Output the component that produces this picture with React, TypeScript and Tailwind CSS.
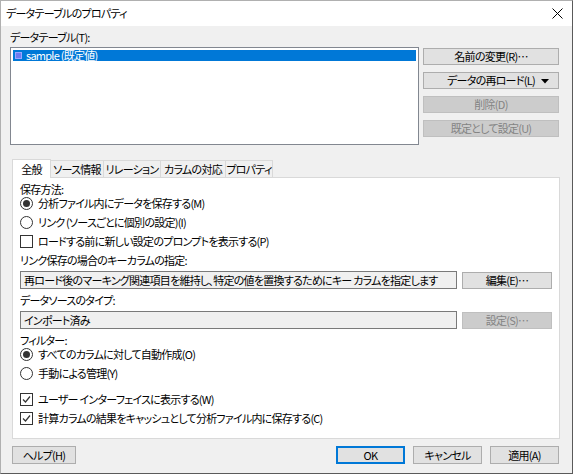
import React from 'react'

const font = { fontFamily: '"Noto Sans CJK JP", "Noto Sans", sans-serif' }

function Button({ label, disabled, primary, className = '', children }: { label: string; disabled?: boolean; primary?: boolean; className?: string; children?: React.ReactNode }) {
  const base = disabled
    ? 'bg-[#cccccc] border-[#bfbfbf] text-[#838383]'
    : primary
      ? 'bg-[#e1e1e1] border-[#0078d7] text-black outline outline-1 outline-[#0078d7] -outline-offset-2'
      : 'bg-[#e1e1e1] border-[#adadad] text-black'
  return (
    <div className={`h-[17px] border flex items-center justify-center leading-none ${base} ${className}`}>
      {label}
      {children}
    </div>
  )
}

function Radio({ checked, label }: { checked?: boolean; label: string }) {
  return (
    <div className="flex items-center gap-[5px] h-[19px]">
      <span className="w-[13px] h-[13px] rounded-full border border-[#333333] bg-white flex items-center justify-center">
        {checked && <span className="w-[7px] h-[7px] rounded-full bg-[#333333]" />}
      </span>
      <span>{label}</span>
    </div>
  )
}

function Check({ checked, label }: { checked?: boolean; label: string }) {
  return (
    <div className="flex items-center gap-[5px] h-[19px]">
      <span className="w-[13px] h-[13px] border border-[#333333] bg-white flex items-center justify-center">
        {checked && (
          <svg width="11" height="11" viewBox="0 0 11 11">
            <path d="M2 5.5 L4.5 8 L9 2.5" fill="none" stroke="#333333" strokeWidth="1.2" />
          </svg>
        )}
      </span>
      <span>{label}</span>
    </div>
  )
}

const tabs = [
  { name: '全般', w: 'w-[39px]' },
  { name: 'ソース情報', w: 'w-[53px]' },
  { name: 'リレーション', w: 'w-[57px]' },
  { name: 'カラムの対応', w: 'w-[65px]' },
  { name: 'プロパティ', w: 'w-[47px]' },
]

export default function App() {
  return (
    <div className="w-[573px] h-[474px] bg-[#f0f0f0] text-[11px] tracking-[-0.75px] [font-feature-settings:'palt'] text-black flex flex-col border-l border-t border-[#b0b0b0] border-r border-r-[#5a5a5a] border-b border-b-[#5a5a5a] overflow-hidden" style={font}>
      {/* Title bar */}
      <div className="h-[25px] bg-white flex items-center justify-between pl-[5px] pr-[9px] shrink-0">
        <span>データテーブルのプロパティ</span>
        <svg width="11" height="11" viewBox="0 0 11 11">
          <path d="M0.5 0.5 L10.5 10.5 M10.5 0.5 L0.5 10.5" stroke="#000" strokeWidth="1" />
        </svg>
      </div>

      <div className="flex-1 flex flex-col px-[9px] pt-[3px]">
        <div className="h-[17px] flex items-center">データテーブル(T):</div>
        <div className="flex gap-[4px] mt-[1px]">
          {/* Listbox */}
          <div className="w-[409px] h-[98px] bg-white border border-[#828790] p-[2px]">
            <div className="h-[11px] bg-[#0078d7] text-white flex items-center gap-[4px] pl-[2px] leading-none">
              <span className="w-[7px] h-[7px] bg-[#6f7cf0] border border-[#9aa6ff]" />
              <span>sample (既定値)</span>
            </div>
          </div>
          <div className="flex flex-col gap-[7px] pt-[1px] w-[136px]">
            <Button label="名前の変更(R)…" />
            <Button label="データの再ロード(L)" className="relative">
              <svg className="absolute right-[9px] top-[6px]" width="8" height="5" viewBox="0 0 8 5">
                <path d="M0 0 H8 L4 4.5 Z" fill="#000" />
              </svg>
            </Button>
            <Button label="削除(D)" disabled />
            <Button label="既定として設定(U)" disabled />
          </div>
        </div>

        {/* Tabs */}
        <div className="mt-[13px] ml-[2px] flex items-end h-[19px]">
          {tabs.map((t, i) =>
            i === 0 ? (
              <div key={t.name} className={`${t.w} h-[19px] bg-white border border-b-0 border-[#d9d9d9] flex items-center justify-center relative z-10 -mb-px`}>
                {t.name}
              </div>
            ) : (
              <div key={t.name} className={`${t.w} h-[17px] bg-[#f0f0f0] border border-l-0 border-b-0 border-[#d9d9d9] flex items-center justify-center`}>
                {t.name}
              </div>
            )
          )}
        </div>
        <div className="ml-[2px] w-[548px] h-[262px] bg-white border border-[#d9d9d9] px-[7px] pt-[6px] flex flex-col">
          <div className="h-[10px] flex items-center">保存方法:</div>
          <Radio checked label="分析ファイル内にデータを保存する(M)" />
          <Radio label="リンク (ソースごとに個別の設定)(I)" />
          <Check label="ロードする前に新しい設定のプロンプトを表示する(P)" />
          <div className="h-[18px] flex items-center">リンク保存の場合のキーカラムの指定:</div>
          <div className="flex items-center gap-[5px] mt-[2px]">
            <div className="w-[437px] h-[18px] bg-[#f0f0f0] border border-[#7a7a7a] flex items-center px-[3px] whitespace-nowrap overflow-hidden">
              再ロード後のマーキング関連項目を維持し、特定の値を置換するためにキー カラムを指定します
            </div>
            <Button label="編集(E)…" className="w-[90px]" />
          </div>
          <div className="h-[18px] flex items-center mt-[2px]">データソースのタイプ:</div>
          <div className="flex items-center gap-[5px] mt-[2px]">
            <div className="w-[437px] h-[18px] bg-[#f0f0f0] border border-[#7a7a7a] flex items-center px-[3px]">
              インポート済み
            </div>
            <Button label="設定(S)…" disabled className="w-[90px]" />
          </div>
          <div className="h-[10px] flex items-center mt-[6px]">フィルター:</div>
          <Radio checked label="すべてのカラムに対して自動作成(O)" />
          <Radio label="手動による管理(Y)" />
          <div className="h-[7px]" />
          <Check checked label="ユーザー インターフェイスに表示する(W)" />
          <Check checked label="計算カラムの結果をキャッシュとして分析ファイル内に保存する(C)" />
        </div>

        {/* Bottom buttons */}
        <div className="flex items-center mt-[7px] ml-[2px]">
          <Button label="ヘルプ(H)" className="w-[64px] h-[18px]" />
          <div className="flex-1" />
          <div className="flex gap-[8px] mr-[4px]">
            <Button label="OK" primary className="w-[69px] h-[18px]" />
            <Button label="キャンセル" className="w-[69px] h-[18px]" />
            <Button label="適用(A)" className="w-[69px] h-[18px]" />
          </div>
        </div>
      </div>
    </div>
  )
}
